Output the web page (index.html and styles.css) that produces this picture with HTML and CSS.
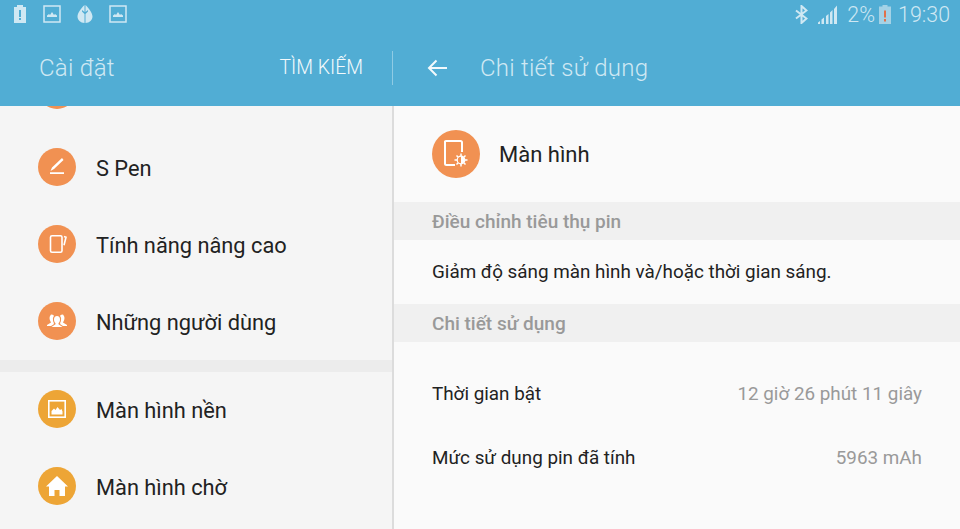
FILE: index.html
```html
<!DOCTYPE html>
<html lang="vi">

<head>
  <meta charset="UTF-8">
  <meta name="viewport" content="width=device-width, initial-scale=1.0">
  <title>Chi tiết sử dụng</title>

  <link rel="stylesheet" href="styles.css">
</head>

<body>
  <header class="top">
    <div class="status">
      <div class="status-icons">
        <svg width="14" height="18" viewBox="0 0 14 18">
          <path fill="#cfe8f3" fill-rule="evenodd" d="M4 0h6v2h3v16H1V2h3zM6 5v7h2V5zM6 13v2h2v-2z" />
        </svg>
        <svg width="18" height="18" viewBox="0 0 18 18">
          <rect x="1" y="1" width="16" height="16" fill="none" stroke="#cfe8f3" stroke-width="1.5" />
          <path fill="#cfe8f3" d="M4 12v-1.500l2-1.500 1 1 2-3 2 3 1-1 2 1.500V12z" />
        </svg>
        <svg width="16" height="18" viewBox="0 0 16 18">
          <path fill="#cfe8f3" d="M7.500 0v7L5 5v1.500l2.500 2.500v9C3.500 18 .5 15 .5 11.500S4 3.500 7.500 0zM8.500 0C12 3.500 15.500 8 15.500 11.500S12.500 18 8.500 18v-9L11 6.500V5L8.500 7z" />
        </svg>
        <svg width="18" height="18" viewBox="0 0 18 18">
          <rect x="1" y="1" width="16" height="16" fill="none" stroke="#cfe8f3" stroke-width="1.5" />
          <path fill="#cfe8f3" d="M4 12v-1.500l2-1.500 1 1 2-3 2 3 1-1 2 1.500V12z" />
        </svg>
      </div>
      <div class="status-right">
        <svg width="13" height="19" viewBox="0 0 13 19">
          <path fill="none" stroke="#cfe8f3" stroke-width="2" d="M1 5.500l10.500 8L6.500 18V1l5 4.500L1 13.500" />
        </svg>
        <svg class="signal" width="19" height="19" viewBox="0 0 19 19">
          <path fill="#cfe8f3" d="M0 17.500L2 16v3H0zM3.500 14.500l2.500-2V19H3.500zM8 11l2.500-2v10H8zM12 7.500L14.500 5v14H12zM16 4l3-3.500V19h-3z" />
        </svg>
        <span class="pct">2%</span>
        <svg width="12" height="19" viewBox="0 0 12 19">
          <path fill="#a3d2e6" d="M3.500 0h5v1.500H12V19H0V1.500h3.500z" />
          <path fill="#e0714a" d="M5 5.500h2v7H5zM5 14h2v2.500H5z" />
        </svg>
        <span class="clock">19:30</span>
      </div>
    </div>
    <div class="bar">
      <div class="bar-left">
        <span class="bar-title">Cài đặt</span>
        <span class="bar-search">TÌM KIẾM</span>
      </div>
      <div class="bar-right">
        <svg width="20" height="18" viewBox="0 0 20 18">
          <path fill="none" stroke="#f2f9fc" stroke-width="2" d="M20 9H2M9.500 1.500L2 9l7.500 7.500" />
        </svg>
        <span class="bar-title">Chi tiết sử dụng</span>
      </div>
    </div>
  </header>

  <main class="panes">
    <nav class="menu">
      <div class="menu-item">
        <span class="dot orange"></span>
      </div>
      <div class="menu-item">
        <span class="dot orange">
          <svg width="22" height="22" viewBox="0 0 22 22">
            <path fill="#fff" d="M16 2l1.500 2L8 13l-3.500 2 1.500-3.500zM4 16.300h14V18H4z" />
          </svg>
        </span>
        S Pen
      </div>
      <div class="menu-item">
        <span class="dot orange">
          <svg width="22" height="22" viewBox="0 0 22 22">
            <rect x="4.500" y="2.800" width="11.500" height="16.400" rx="1.500" fill="none" stroke="#fff" stroke-width="1.600" />
            <path fill="none" stroke="#fff" stroke-width="1.600" d="M18 3.500l2 .8-2 8" />
          </svg>
        </span>
        Tính năng nâng cao
      </div>
      <div class="menu-item">
        <span class="dot orange">
          <svg width="22" height="22" viewBox="0 0 22 22">
            <path fill="#fff" d="M5 4.500q2 0 3 1.200-1.500 1.800-1 4.800.2 1.500 1 2.500l-.5 1.500-2.500 1.500H1v-1l4-2.500q-1.500-2-1.500-4.500 0-2 1.500-3.500zM17 4.500q-2 0-3 1.200 1.500 1.800 1 4.800-.2 1.500-1 2.500l.5 1.500 2.500 1.500h4v-1l-4-2.500q1.500-2 1.500-4.500 0-2-1.500-3.500z" />
            <path fill="#fff" d="M11 6c2 0 3 1.500 3 3.500 0 1.700-.7 3-1.500 3.800v1l4 2.700h-11l4-2.700v-1c-.8-.8-1.500-2.100-1.500-3.800C8 7.500 9 6 11 6z" />
          </svg>
        </span>
        Những người dùng
      </div>
      <div class="menu-gap"></div>
      <div class="menu-item">
        <span class="dot yellow">
          <svg width="22" height="22" viewBox="0 0 22 22">
            <rect x="2.800" y="2.800" width="16.400" height="16.400" fill="none" stroke="#fff" stroke-width="1.600" />
            <path fill="#fff" d="M5.500 16.500v-3.500l2.500-2.500 1.500 1.500 2-3 2.500 3 1.500-1 1 2.500v3z" />
          </svg>
        </span>
        Màn hình nền
      </div>
      <div class="menu-item">
        <span class="dot yellow">
          <svg width="22" height="22" viewBox="0 0 22 22">
            <path fill="#fff" d="M11 1L22 11.500h-3V21h-5.500v-6h-5v6H3v-9.500H0z" />
          </svg>
        </span>
        Màn hình chờ
      </div>
    </nav>

    <section class="detail">
      <div class="app-row">
        <span class="dot orange big">
          <svg width="28" height="30" viewBox="0 0 28 30">
            <path fill="none" stroke="#fff" stroke-width="2" d="M13 26H4.500A1.500 1.500 0 0 1 3 24.500v-22A1.500 1.500 0 0 1 4.500 2h14A1.500 1.500 0 0 1 20 3.500V13" />
            <path fill="none" stroke="#fff" stroke-width="1.500" d="M19 14.500v13M12.500 21h13M14.500 16.500l9 9M23.500 16.500l-9 9" />
            <circle cx="19" cy="21" r="3.800" fill="#f19152" stroke="#fff" stroke-width="1.200" />
            <path fill="#fff" d="M19 17.200a3.800 3.800 0 0 1 0 7.600z" />
          </svg>
        </span>
        <span class="app-name">Màn hình</span>
      </div>
      <h2 class="sec-head">Điều chỉnh tiêu thụ pin</h2>
      <p class="tip">Giảm độ sáng màn hình và/hoặc thời gian sáng.</p>
      <h2 class="sec-head">Chi tiết sử dụng</h2>
      <div class="stats">
        <div class="stat-row">
          <span>Thời gian bật</span>
          <span class="stat-val">12 giờ 26 phút 11 giây</span>
        </div>
        <div class="stat-row">
          <span>Mức sử dụng pin đã tính</span>
          <span class="stat-val">5963 mAh</span>
        </div>
      </div>
    </section>
  </main>
</body>

</html>
```

FILE: styles.css
```css
* {
  margin: 0;
  padding: 0;
  box-sizing: border-box;
}

body {
  width: 960px;
  height: 529px;
  overflow: hidden;
  background: #fafafa;
  font-family: Roboto, sans-serif;
  color: #222;
}

.top {
  position: relative;
  z-index: 1;
  height: 106px;
  background: #51add4;
  color: #cfe8f3;
}

.status {
  height: 33px;
  padding: 5px 10px 0 13px;
  display: flex;
  justify-content: space-between;
  align-items: flex-start;
}

.status-icons {
  display: flex;
  gap: 16px;
}

.status-right {
  display: flex;
  align-items: center;
  height: 19px;
}

.signal {
  margin-left: 10px;
}

.pct {
  margin-left: 10px;
  margin-right: 4px;
  font-size: 21.4px;
  font-weight: 300;
}

.clock {
  margin-left: 7px;
  font-size: 21.4px;
  font-weight: 300;
}

.bar {
  height: 73px;
  display: flex;
  align-items: center;
}

.bar-left {
  width: 393px;
  height: 34px;
  margin-top: -4px;
  padding: 0 29px 0 39px;
  border-right: 1px solid #8fcbe4;
  display: flex;
  justify-content: space-between;
  align-items: center;
}

.bar-right {
  display: flex;
  align-items: center;
  gap: 33px;
  margin-top: -4px;
  padding-left: 34px;
}

.bar-title {
  font-size: 24px;
  font-weight: 300;
  letter-spacing: .25px;
}

.bar-search {
  font-size: 19.400px;
  font-weight: 300;
  color: #f2f9fc;
}

.panes {
  display: flex;
  height: 423px;
}

.menu {
  width: 394px;
  background: #f5f5f5;
  border-right: 2px solid #dcdcdc;
  font-size: 21.8px;
  overflow: hidden;
}

.menu-item {
  height: 77px;
  padding-left: 38px;
  display: flex;
  align-items: center;
  gap: 20px;
}

.menu-item:first-child {
  margin-top: -53px;
}

.menu-item .dot {
  margin-bottom: 3px;
}

.menu-gap {
  height: 12px;
  margin-top: -1px;
  background: #ececec;
}

.dot {
  flex: 0 0 38px;
  width: 38px;
  height: 38px;
  border-radius: 50%;
  display: flex;
  justify-content: center;
  align-items: center;
}

.dot.big {
  flex-basis: 48px;
  width: 48px;
  height: 48px;
}

.orange {
  background: #f19152;
}

.yellow {
  background: #eda536;
}

.detail {
  flex: 1;
}

.app-row {
  height: 96px;
  padding-left: 38px;
  display: flex;
  align-items: center;
  gap: 19px;
}

.app-name {
  font-size: 22px;
}

.sec-head {
  height: 38px;
  padding-left: 38px;
  background: #f0f0f0;
  color: #999;
  font-size: 19px;
  font-weight: 500;
  line-height: 40px;
}

.tip {
  height: 64px;
  padding-left: 38px;
  font-size: 18.85px;
  line-height: 65px;
}

.stats {
  padding: 20px 38px 0;
  font-size: 18.85px;
}

.stat-row {
  height: 64px;
  display: flex;
  justify-content: space-between;
  align-items: center;
}

.stat-val {
  color: #999;
}
```
